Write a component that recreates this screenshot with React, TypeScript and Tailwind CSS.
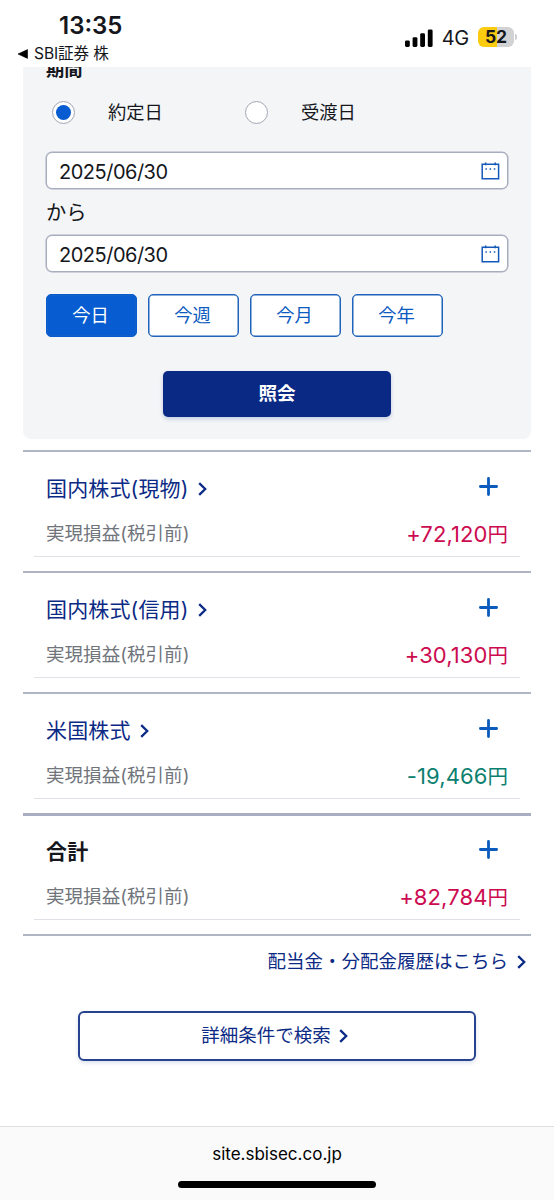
import clsx from "clsx";

type Section = {
  title: string;
  amount: string;
  loss?: boolean;
  total?: boolean;
};

const sections: Section[] = [
  { title: "国内株式(現物)", amount: "+72,120" },
  { title: "国内株式(信用)", amount: "+30,130" },
  { title: "米国株式", amount: "-19,466", loss: true },
  { title: "合計", amount: "+82,784", total: true },
];

const periods = ["今日", "今週", "今月", "今年"];

function Chevron() {
  return (
    <svg className="h-[14px] w-[9px] shrink-0" viewBox="0 0 9 14" fill="none" stroke="#0b2a85" strokeWidth="2.3">
      <path d="M1.2 1.2 7.2 7l-6 5.8" />
    </svg>
  );
}

function Plus() {
  return (
    <svg className="mb-[3px] mr-[10px] size-[19px]" viewBox="0 0 19 19" stroke="#0a5bbd" strokeWidth="2.8" strokeLinecap="round">
      <path d="M9.5 1.4v16.2M1.4 9.5h16.2" />
    </svg>
  );
}

function CalendarIcon() {
  return (
    <svg className="h-[18px] w-[19px]" viewBox="0 0 19 18" fill="none" stroke="#1259b8">
      <path d="M1.2 2.2h16.4v14.6H1.2z" strokeWidth="1.5" />
      <path d="M4.6 .6v2.6M14.2 .6v2.6" strokeWidth="1.5" />
      <path d="M4.4 7h1.5M8.6 7h1.5M12.8 7h1.5" strokeWidth="1.4" />
    </svg>
  );
}

function StatusBar() {
  return (
    <header className="flex h-[67px] justify-between">
      <div className="pl-[17px] pt-[11px]">
        <div className="pl-[42px] text-[24px] font-semibold leading-[30px]">13:35</div>
        <div className="flex items-center gap-[6px] pt-px">
          <svg className="h-[10px] w-[11px]" viewBox="0 0 11 10">
            <path d="M1 5 10.5.6v8.8z" stroke="#000" strokeWidth=".6" strokeLinejoin="round" />
          </svg>
          <span className="text-[15.6px] leading-[24px] tracking-[-0.1px]">SBI証券 株</span>
        </div>
      </div>
      <div className="flex h-[74px] items-center pr-[40px]">
        <svg className="mt-px h-[18px] w-[28px]" viewBox="0 0 28 18">
          <rect x="0" y="11.4" width="4.8" height="6.6" rx="1.4" />
          <rect x="7.6" y="8.2" width="4.8" height="9.8" rx="1.4" />
          <rect x="15.2" y="4.2" width="4.8" height="13.8" rx="1.4" />
          <rect x="22.8" y="0.4" width="4.8" height="17.6" rx="1.4" />
        </svg>
        <span className="ml-[9px] mt-px text-[20px] tracking-[-0.3px]">4G</span>
        <span className="ml-[9px] flex h-5 w-[36px] items-center justify-center rounded-[6px] bg-linear-to-r from-[#fbcb10] from-52% to-[#d2d2d4] to-52% text-[17.5px] font-bold">
          52
        </span>
        <span className="-mr-[3px] ml-px h-[6px] w-[2px] rounded-r-full bg-[#cfcfd2]" />
      </div>
    </header>
  );
}

function Radio({ label, checked }: { label: string; checked?: boolean }) {
  return (
    <label className="flex w-[193px] items-center">
      <span className="flex size-[23px] items-center justify-center rounded-full border border-[#a2a7b4] bg-white">
        {checked && <span className="size-[15px] rounded-full bg-[#065cd0]" />}
      </span>
      <span className="ml-[33px] text-[18.3px]">{label}</span>
    </label>
  );
}

function DateField({ value }: { value: string }) {
  return (
    <div className="flex h-[37px] items-center justify-between rounded-[6px] border border-[#a9aebf] bg-white pl-3 pr-[7px] shadow-[0_0_0_0.5px_#a9aebf]">
      <span className="pt-[2px] text-[20px] tracking-[-0.5px]">{value}</span>
      <CalendarIcon />
    </div>
  );
}

function SearchPanel() {
  return (
    <section className="mx-[23px] h-[372px] overflow-hidden rounded-b-[8px] bg-[#f3f5f7] px-[23px]">
      <h2 className="-mt-[10px] h-[24px] text-[18.3px] font-bold leading-[24px]">期間</h2>
      <div className="mt-5 flex h-[23px] pl-[6px]">
        <Radio label="約定日" checked />
        <Radio label="受渡日" />
      </div>
      <div className="mt-[28px]">
        <DateField value="2025/06/30" />
        <div className="flex h-[46px] items-center pt-[2px] text-[20.3px]">から</div>
        <DateField value="2025/06/30" />
      </div>
      <div className="mt-[22px] flex gap-[11px]">
        {periods.map((period, i) => (
          <button
            key={period}
            className={clsx(
              "h-[43px] w-[91px] rounded-[5px] border pr-[2px] pt-px text-[18.3px] shadow-[inset_0_0_0_0.5px_#1f63ba]",
              i === 0 ? "border-[#065cd0] bg-[#065cd0] text-white" : "border-[#1f63ba] bg-white text-[#0b5abf]"
            )}
          >
            {period}
          </button>
        ))}
      </div>
      <button className="mx-auto mt-[34px] block h-[46px] w-[228px] rounded-[5px] bg-[#092984] text-[18.6px] font-bold text-white shadow-[0_2px_4px_rgba(9,41,132,0.2)]">
        照会
      </button>
    </section>
  );
}

function ProfitSection({ title, amount, loss, total }: Section) {
  return (
    <section
      className={clsx(
        "mx-[23px] h-[121px] px-[11px]",
        total ? "border-t-3 border-[#a9aec0] pt-3" : "border-t-2 border-[#b0b5c3] pt-[13px]"
      )}
    >
      <div className="flex h-[46px] items-center justify-between px-3">
        <h3
          className={clsx(
            "flex items-center gap-[9px] pt-[2px] text-[21px] tracking-[0.15px]",
            total ? "font-bold text-[#15171c]" : "text-[#0b2a85]"
          )}
        >
          {title}
          {!total && <Chevron />}
        </h3>
        <Plus />
      </div>
      <div className="flex h-[46px] items-center justify-between border-b border-[#e0e2e8] px-3">
        <span className="pt-px text-[18.5px] tracking-[0.05px] text-[#70747b]">実現損益(税引前)</span>
        <span className={clsx("pt-px text-[22px] tracking-[0.1px]", loss ? "text-[#0c8070]" : "text-[#cc0b50]")}>
          {amount}
          <span className="text-[20.5px] tracking-normal">円</span>
        </span>
      </div>
    </section>
  );
}

export default function App() {
  return (
    <div className="flex h-[1200px] w-[554px] flex-col overflow-hidden bg-white font-[Inter,'Noto_Sans_CJK_JP',sans-serif] text-[#15171c]">
      <StatusBar />
      <main className="h-[1059px]">
        <SearchPanel />
        <div className="mt-[11px]">
          {sections.map((section) => (
            <ProfitSection key={section.title} {...section} />
          ))}
        </div>
        <div className="mx-[23px] flex h-[53px] items-center justify-end gap-[9px] border-t-2 border-[#b0b5c3] pr-[5px] text-[18.5px] text-[#0b2a85]">
          配当金・分配金履歴はこちら
          <Chevron />
        </div>
        <button className="mx-auto mt-6 flex h-[50px] w-[398px] items-center justify-center gap-[8px] rounded-[6px] border-2 border-[#27428f] pr-[5px] text-[18.5px] text-[#0b2a85] shadow-[0_2px_4px_rgba(9,41,132,0.14)]">
          詳細条件で検索
          <Chevron />
        </button>
      </main>
      <footer className="flex h-[74px] flex-col items-center border-t border-[#dedee0] bg-[#fafafb] pt-[14px]">
        <span className="text-[17px] leading-[26px] text-black">site.sbisec.co.jp</span>
        <span className="mt-[14px] h-[7px] w-[198px] rounded-full bg-black" />
      </footer>
    </div>
  );
}
